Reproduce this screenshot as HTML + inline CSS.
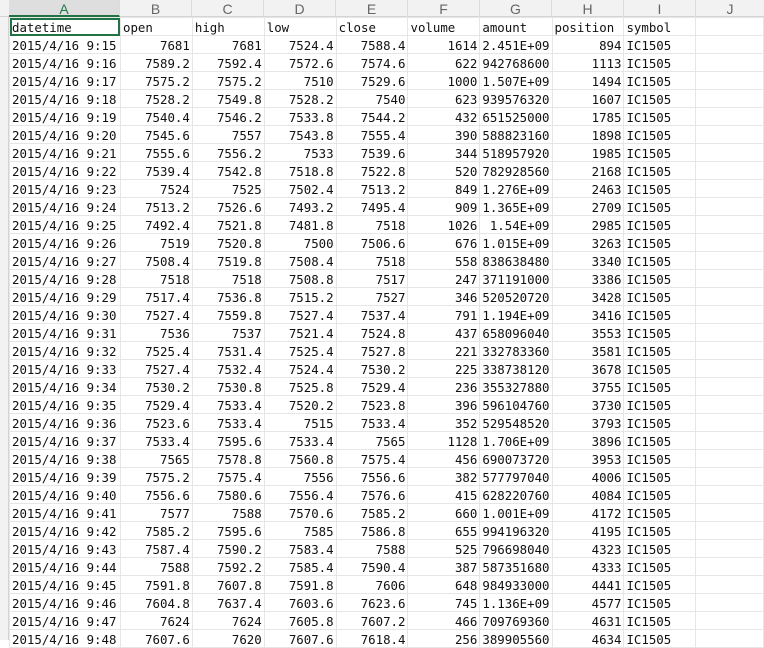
<!DOCTYPE html><html><head><meta charset="utf-8"><style>
body{margin:0;width:764px;height:640px;overflow:hidden;background:#fff;position:relative;font-family:"Liberation Mono",monospace;}
.hdr{position:absolute;top:0;left:0;width:764px;height:17px;background:#f2f2f2;border-bottom:1px solid #d4d4d4;box-sizing:border-box}
.hc{position:absolute;top:0;height:17px;line-height:18px;text-align:center;font-family:"Liberation Sans",sans-serif;font-size:14px;color:#666;border-right:1px solid #dcdcdc;box-sizing:border-box}
.rh{position:absolute;left:0;width:9px;top:17px;height:623px;background:#f2f2f2;border-right:1px solid #d4d4d4;box-sizing:border-box}
table{position:absolute;left:9px;top:17px;border-collapse:collapse;table-layout:fixed}
td{height:17px;padding:2px 2px 0 2px;box-sizing:border-box;border:1px solid #e6e6e6;font-size:12.6px;line-height:15px;white-space:nowrap;overflow:hidden;text-align:right;color:#111;font-family:"DejaVu Sans Mono","Liberation Mono",monospace;font-size:12.4px}
td.l{text-align:left}
</style></head><body>
<div class="hdr"></div>
<div class="hc" style="left:9px;width:111px;background:#dedede;color:#1e7a45;border-bottom:2px solid #217346">A</div>
<div class="hc" style="left:120px;width:72px">B</div>
<div class="hc" style="left:192px;width:72px">C</div>
<div class="hc" style="left:264px;width:72px">D</div>
<div class="hc" style="left:336px;width:72px">E</div>
<div class="hc" style="left:408px;width:72px">F</div>
<div class="hc" style="left:480px;width:72px">G</div>
<div class="hc" style="left:552px;width:72px">H</div>
<div class="hc" style="left:624px;width:72px">I</div>
<div class="hc" style="left:696px;width:68px;border-right:none">J</div>
<div class="rh"></div>
<table>
<colgroup><col style="width:111px"><col style="width:72px"><col style="width:72px"><col style="width:72px"><col style="width:72px"><col style="width:72px"><col style="width:72px"><col style="width:72px"><col style="width:72px"><col style="width:68px"></colgroup>
<tr><td class="l" style="outline:2px solid #217346;outline-offset:-2px">datetime</td><td class="l">open</td><td class="l">high</td><td class="l">low</td><td class="l">close</td><td class="l">volume</td><td class="l">amount</td><td class="l">position</td><td class="l">symbol</td><td></td></tr>
<tr><td class="l">2015/4/16 9:15</td><td>7681</td><td>7681</td><td>7524.4</td><td>7588.4</td><td>1614</td><td class="l">2.451E+09</td><td>894</td><td class="l">IC1505</td><td></td></tr>
<tr><td class="l">2015/4/16 9:16</td><td>7589.2</td><td>7592.4</td><td>7572.6</td><td>7574.6</td><td>622</td><td class="l">942768600</td><td>1113</td><td class="l">IC1505</td><td></td></tr>
<tr><td class="l">2015/4/16 9:17</td><td>7575.2</td><td>7575.2</td><td>7510</td><td>7529.6</td><td>1000</td><td class="l">1.507E+09</td><td>1494</td><td class="l">IC1505</td><td></td></tr>
<tr><td class="l">2015/4/16 9:18</td><td>7528.2</td><td>7549.8</td><td>7528.2</td><td>7540</td><td>623</td><td class="l">939576320</td><td>1607</td><td class="l">IC1505</td><td></td></tr>
<tr><td class="l">2015/4/16 9:19</td><td>7540.4</td><td>7546.2</td><td>7533.8</td><td>7544.2</td><td>432</td><td class="l">651525000</td><td>1785</td><td class="l">IC1505</td><td></td></tr>
<tr><td class="l">2015/4/16 9:20</td><td>7545.6</td><td>7557</td><td>7543.8</td><td>7555.4</td><td>390</td><td class="l">588823160</td><td>1898</td><td class="l">IC1505</td><td></td></tr>
<tr><td class="l">2015/4/16 9:21</td><td>7555.6</td><td>7556.2</td><td>7533</td><td>7539.6</td><td>344</td><td class="l">518957920</td><td>1985</td><td class="l">IC1505</td><td></td></tr>
<tr><td class="l">2015/4/16 9:22</td><td>7539.4</td><td>7542.8</td><td>7518.8</td><td>7522.8</td><td>520</td><td class="l">782928560</td><td>2168</td><td class="l">IC1505</td><td></td></tr>
<tr><td class="l">2015/4/16 9:23</td><td>7524</td><td>7525</td><td>7502.4</td><td>7513.2</td><td>849</td><td class="l">1.276E+09</td><td>2463</td><td class="l">IC1505</td><td></td></tr>
<tr><td class="l">2015/4/16 9:24</td><td>7513.2</td><td>7526.6</td><td>7493.2</td><td>7495.4</td><td>909</td><td class="l">1.365E+09</td><td>2709</td><td class="l">IC1505</td><td></td></tr>
<tr><td class="l">2015/4/16 9:25</td><td>7492.4</td><td>7521.8</td><td>7481.8</td><td>7518</td><td>1026</td><td>1.54E+09</td><td>2985</td><td class="l">IC1505</td><td></td></tr>
<tr><td class="l">2015/4/16 9:26</td><td>7519</td><td>7520.8</td><td>7500</td><td>7506.6</td><td>676</td><td class="l">1.015E+09</td><td>3263</td><td class="l">IC1505</td><td></td></tr>
<tr><td class="l">2015/4/16 9:27</td><td>7508.4</td><td>7519.8</td><td>7508.4</td><td>7518</td><td>558</td><td class="l">838638480</td><td>3340</td><td class="l">IC1505</td><td></td></tr>
<tr><td class="l">2015/4/16 9:28</td><td>7518</td><td>7518</td><td>7508.8</td><td>7517</td><td>247</td><td class="l">371191000</td><td>3386</td><td class="l">IC1505</td><td></td></tr>
<tr><td class="l">2015/4/16 9:29</td><td>7517.4</td><td>7536.8</td><td>7515.2</td><td>7527</td><td>346</td><td class="l">520520720</td><td>3428</td><td class="l">IC1505</td><td></td></tr>
<tr><td class="l">2015/4/16 9:30</td><td>7527.4</td><td>7559.8</td><td>7527.4</td><td>7537.4</td><td>791</td><td class="l">1.194E+09</td><td>3416</td><td class="l">IC1505</td><td></td></tr>
<tr><td class="l">2015/4/16 9:31</td><td>7536</td><td>7537</td><td>7521.4</td><td>7524.8</td><td>437</td><td class="l">658096040</td><td>3553</td><td class="l">IC1505</td><td></td></tr>
<tr><td class="l">2015/4/16 9:32</td><td>7525.4</td><td>7531.4</td><td>7525.4</td><td>7527.8</td><td>221</td><td class="l">332783360</td><td>3581</td><td class="l">IC1505</td><td></td></tr>
<tr><td class="l">2015/4/16 9:33</td><td>7527.4</td><td>7532.4</td><td>7524.4</td><td>7530.2</td><td>225</td><td class="l">338738120</td><td>3678</td><td class="l">IC1505</td><td></td></tr>
<tr><td class="l">2015/4/16 9:34</td><td>7530.2</td><td>7530.8</td><td>7525.8</td><td>7529.4</td><td>236</td><td class="l">355327880</td><td>3755</td><td class="l">IC1505</td><td></td></tr>
<tr><td class="l">2015/4/16 9:35</td><td>7529.4</td><td>7533.4</td><td>7520.2</td><td>7523.8</td><td>396</td><td class="l">596104760</td><td>3730</td><td class="l">IC1505</td><td></td></tr>
<tr><td class="l">2015/4/16 9:36</td><td>7523.6</td><td>7533.4</td><td>7515</td><td>7533.4</td><td>352</td><td class="l">529548520</td><td>3793</td><td class="l">IC1505</td><td></td></tr>
<tr><td class="l">2015/4/16 9:37</td><td>7533.4</td><td>7595.6</td><td>7533.4</td><td>7565</td><td>1128</td><td class="l">1.706E+09</td><td>3896</td><td class="l">IC1505</td><td></td></tr>
<tr><td class="l">2015/4/16 9:38</td><td>7565</td><td>7578.8</td><td>7560.8</td><td>7575.4</td><td>456</td><td class="l">690073720</td><td>3953</td><td class="l">IC1505</td><td></td></tr>
<tr><td class="l">2015/4/16 9:39</td><td>7575.2</td><td>7575.4</td><td>7556</td><td>7556.6</td><td>382</td><td class="l">577797040</td><td>4006</td><td class="l">IC1505</td><td></td></tr>
<tr><td class="l">2015/4/16 9:40</td><td>7556.6</td><td>7580.6</td><td>7556.4</td><td>7576.6</td><td>415</td><td class="l">628220760</td><td>4084</td><td class="l">IC1505</td><td></td></tr>
<tr><td class="l">2015/4/16 9:41</td><td>7577</td><td>7588</td><td>7570.6</td><td>7585.2</td><td>660</td><td class="l">1.001E+09</td><td>4172</td><td class="l">IC1505</td><td></td></tr>
<tr><td class="l">2015/4/16 9:42</td><td>7585.2</td><td>7595.6</td><td>7585</td><td>7586.8</td><td>655</td><td class="l">994196320</td><td>4195</td><td class="l">IC1505</td><td></td></tr>
<tr><td class="l">2015/4/16 9:43</td><td>7587.4</td><td>7590.2</td><td>7583.4</td><td>7588</td><td>525</td><td class="l">796698040</td><td>4323</td><td class="l">IC1505</td><td></td></tr>
<tr><td class="l">2015/4/16 9:44</td><td>7588</td><td>7592.2</td><td>7585.4</td><td>7590.4</td><td>387</td><td class="l">587351680</td><td>4333</td><td class="l">IC1505</td><td></td></tr>
<tr><td class="l">2015/4/16 9:45</td><td>7591.8</td><td>7607.8</td><td>7591.8</td><td>7606</td><td>648</td><td class="l">984933000</td><td>4441</td><td class="l">IC1505</td><td></td></tr>
<tr><td class="l">2015/4/16 9:46</td><td>7604.8</td><td>7637.4</td><td>7603.6</td><td>7623.6</td><td>745</td><td class="l">1.136E+09</td><td>4577</td><td class="l">IC1505</td><td></td></tr>
<tr><td class="l">2015/4/16 9:47</td><td>7624</td><td>7624</td><td>7605.8</td><td>7607.2</td><td>466</td><td class="l">709769360</td><td>4631</td><td class="l">IC1505</td><td></td></tr>
<tr><td class="l">2015/4/16 9:48</td><td>7607.6</td><td>7620</td><td>7607.6</td><td>7618.4</td><td>256</td><td class="l">389905560</td><td>4634</td><td class="l">IC1505</td><td></td></tr>
</table>
</body></html>
